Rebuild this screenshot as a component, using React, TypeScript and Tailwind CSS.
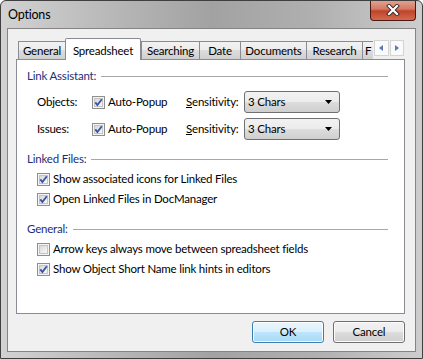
import React from "react"

const font = { fontFamily: "Lato, 'Liberation Sans', sans-serif" }

function CheckBox({ checked }: { checked: boolean }) {
  return (
    <svg width="13" height="13" viewBox="0 0 13 13" className="shrink-0">
      <defs>
        <linearGradient id="cbg" x1="0" y1="0" x2="1" y2="1">
          <stop offset="0" stopColor="#d6d6d6" />
          <stop offset="1" stopColor="#fbfbfb" />
        </linearGradient>
      </defs>
      <rect x="0.5" y="0.5" width="12" height="12" fill="#f4f4f4" stroke="#8e8f8f" />
      <rect x="2.5" y="2.5" width="8" height="8" fill="url(#cbg)" stroke="#c4c4c4" />
      {checked && (
        <path d="M3.3 6.4 L5.4 9 L9.8 3.2" fill="none" stroke="#3a55a3" strokeWidth="1.9" />
      )}
    </svg>
  )
}

function GroupHeader({ label }: { label: string }) {
  return (
    <div className="h-[20px] flex items-center pl-[10px] pr-[16px]">
      <span className="text-[#1e2d7a]">{label}</span>
      <div className="flex-1 ml-[5px] h-px bg-[#a8a8a8]" />
    </div>
  )
}

function CheckRow({ checked, label }: { checked: boolean; label: string }) {
  return (
    <div className="h-[20px] flex items-center pl-[20px] gap-[3px]">
      <CheckBox checked={checked} />
      <span>{label}</span>
    </div>
  )
}

function Combo({ value }: { value: string }) {
  return (
    <div className="w-[96px] h-[22px] flex items-center justify-between border border-[#707070] rounded-[3px] bg-[linear-gradient(#f2f2f2,#ebebeb_50%,#dddddd_50%,#cfcfcf)] pl-[3px] pr-[7px]">
      <span>{value}</span>
      <svg width="7" height="4" viewBox="0 0 7 4">
        <path d="M0 0 H7 L3.5 4 Z" fill="#000" />
      </svg>
    </div>
  )
}

function AssistRow({ label }: { label: string }) {
  return (
    <div className="h-[22px] flex items-center pl-[20px]">
      <span className="w-[55px]">{label}</span>
      <div className="w-[94px] flex items-center gap-[3px]">
        <CheckBox checked />
        <span>Auto-Popup</span>
      </div>
      <span className="w-[58px]">
        <span className="underline">S</span>ensitivity:
      </span>
      <Combo value="3 Chars" />
    </div>
  )
}

const tabs = [
  { name: "General", w: "w-[47px]" },
  { name: "Spreadsheet", w: "w-[76px]", active: true },
  { name: "Searching", w: "w-[58px]" },
  { name: "Date", w: "w-[41px]" },
  { name: "Documents", w: "w-[66px]" },
  { name: "Research", w: "w-[56px]" },
]

export default function App() {
  return (
    <div
      className="w-[423px] h-[359px] flex flex-col border border-[#3f3f3f] rounded-t-[6px] bg-[linear-gradient(90deg,#d2d2d2,#b4b4b4_30%,#a2a2a2_50%,#b0b0b0_75%,#cdcdcd)] text-[11.5px] tracking-[-0.2px] text-black overflow-hidden"
      style={font}
    >
      {/* title bar */}
      <div className="h-[27px] flex items-start justify-between">
        <span className="pl-[7px] pt-[6px] text-[12.5px] leading-[16px]">Options</span>
        <div className="-mt-px mr-[6px] w-[46px] h-[21px] flex items-center justify-center border border-[#4a1a12] border-t-0 rounded-b-[4px] bg-[linear-gradient(#e4a493,#d47a64_45%,#c0432c_55%,#d26a4e)]">
          <svg width="14" height="12" viewBox="0 0 14 12">
            <path d="M3 2 L11 10 M11 2 L3 10" stroke="#3b2a28" strokeWidth="4" strokeLinecap="square" />
            <path d="M3 2 L11 10 M11 2 L3 10" stroke="#ffffff" strokeWidth="2.2" strokeLinecap="square" />
          </svg>
        </div>
      </div>

      {/* client area */}
      <div className="flex-1 mx-[6px] mb-[6px] border border-[#848484] bg-[#f0f0f0] pl-[8px] pr-[10px] pt-[9px] flex flex-col">
        {/* tab strip */}
        <div className="h-[21px] flex items-end pl-[2px] relative z-10">
          {tabs.map((t) =>
            t.active ? (
              <div
                key={t.name}
                className={`${t.w} h-[22px] -mb-px flex items-start justify-center pt-[3px] bg-white border border-b-0 border-[#898c95] rounded-t-[2px]`}
              >
                {t.name}
              </div>
            ) : (
              <div
                key={t.name}
                className={`${t.w} h-[18px] flex items-center justify-center border-t border-l border-[#898c95] bg-[linear-gradient(#f2f2f2,#ebebeb_50%,#dddddd_50%,#cfcfcf)]`}
              >
                {t.name}
              </div>
            )
          )}
          <div className="w-[11px] h-[18px] overflow-hidden flex items-center pl-[2px] border-t border-l border-[#898c95] bg-[linear-gradient(#f2f2f2,#ebebeb_50%,#dddddd_50%,#cfcfcf)]">
            F
          </div>
          <div className="w-[31px] h-[19px] self-start mt-[1px] flex gap-[1px] pl-[1px] pt-[1px] bg-[#f0f0f0]">
            {["M4 0 V6 L0 3 Z", "M0 0 V6 L4 3 Z"].map((d) => (
              <div
                key={d}
                className="w-[15px] h-[16px] flex items-center justify-center border border-[#d4d4d4] bg-[#fafafa]"
              >
                <svg width="4" height="6" viewBox="0 0 4 6">
                  <path d={d} fill="#5b7ab2" />
                </svg>
              </div>
            ))}
          </div>
        </div>

        {/* tab panel */}
        <div className="h-[255px] bg-white border border-[#898c95] flex flex-col">
          <div className="mt-[6px]">
            <GroupHeader label="Link Assistant:" />
          </div>
          <div className="mt-[5px]">
            <AssistRow label="Objects:" />
          </div>
          <div className="mt-[5px]">
            <AssistRow label="Issues:" />
          </div>
          <div className="mt-[9px]">
            <GroupHeader label="Linked Files:" />
          </div>
          <CheckRow checked label="Show associated icons for Linked Files" />
          <CheckRow checked label="Open Linked Files in DocManager" />
          <div className="mt-[10px]">
            <GroupHeader label="General:" />
          </div>
          <CheckRow checked={false} label="Arrow keys always move between spreadsheet fields" />
          <CheckRow checked label="Show Object Short Name link hints in editors" />
        </div>

        {/* buttons */}
        <div className="mt-[7px] flex justify-end gap-[9px]">
          <button className="w-[72px] h-[22px] border border-[#3c7fb1] rounded-[3px] shadow-[inset_0_0_0_1px_#ffffff] bg-[linear-gradient(#eaf6fd,#d9f0fc_50%,#bee6fd_50%,#a7d9f5)]">
            OK
          </button>
          <button className="w-[72px] h-[22px] border border-[#707070] rounded-[3px] shadow-[inset_0_0_0_1px_#fbfbfb] bg-[linear-gradient(#f2f2f2,#ebebeb_50%,#dddddd_50%,#cfcfcf)]">
            Cancel
          </button>
        </div>
      </div>
    </div>
  )
}
